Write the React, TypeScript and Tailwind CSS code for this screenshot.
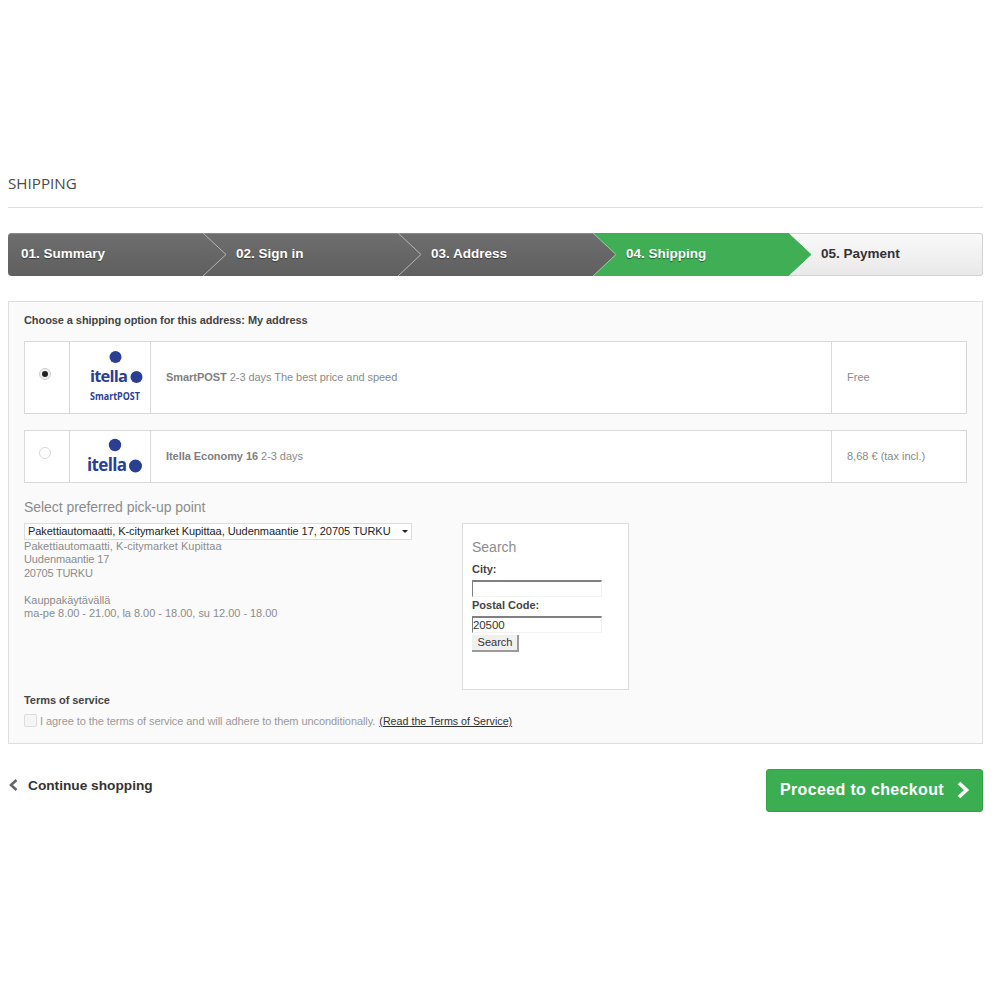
const steps = [
  { label: "01. Summary", kind: "done" },
  { label: "02. Sign in", kind: "done" },
  { label: "03. Address", kind: "done" },
  { label: "04. Shipping", kind: "current" },
  { label: "05. Payment", kind: "todo" },
];

const StepArrow = ({ id, current, stroke }: { id: string; current?: boolean; stroke: string }) => {
  return (
    <svg className="absolute -right-[24px] top-0 z-10" width="24" height="43" viewBox="0 0 24 43">
      <defs>
        <linearGradient id={id} x1="0" y1="0" x2="0" y2="1">
          <stop offset="0" stopColor={current ? "#3fae55" : "#6e6e6e"} />
          <stop offset="1" stopColor={current ? "#3fae55" : "#5f5f5f"} />
        </linearGradient>
      </defs>
      <path d="M0 0 L23 21.5 L0 43 Z" fill={`url(#${id})`} />
      <path d="M0 0 L23 21.5 L0 43" fill="none" stroke={stroke} strokeWidth="1" />
    </svg>
  );
};

const Step = ({ label, kind, index }: { label: string; kind: string; index: number }) => {
  const base = "relative w-[195px] shrink-0 h-[43px] pb-[1px] flex items-center text-[13.5px] font-bold";
  if (kind === "todo") {
    return (
      <div className={`${base} pl-[33px] border-y border-r border-[#d2d2d2] rounded-r-[3px] bg-gradient-to-b from-[#f9f9f9] to-[#e9e9e9] text-[#333]`}>
        {label}
      </div>
    );
  }
  const isCurrent = kind === "current";
  return (
    <div
      className={`${base} text-white [text-shadow:0_1px_1px_rgba(0,0,0,0.45)] ${index === 0 ? "pl-[13px] rounded-l-[4px]" : "pl-[33px]"} ${
        isCurrent ? "bg-[#3fae55]" : "bg-gradient-to-b from-[#6e6e6e] to-[#5f5f5f] shadow-[inset_0_1px_0_#8a8a8a]"
      }`}
    >
      {label}
      <StepArrow id={`arrow-${index}`} current={isCurrent} stroke={isCurrent ? "#3fae55" : index === 2 ? "#9fc9a8" : "#b5b5b5"} />
    </div>
  );
};

const SmartPostLogo = () => {
  return (
    <svg width="80" height="71" viewBox="0 0 80 71">
      <circle cx="45.5" cy="15" r="6" fill="#2b3f92" />
      <text x="20" y="40" fontFamily="'Open Sans', sans-serif" fontSize="16.5" fontWeight="700" textLength="38" fill="#2b3f92">itella</text>
      <circle cx="66.5" cy="35" r="6" fill="#2b3f92" />
      <text x="20" y="58" fontFamily="'Open Sans', sans-serif" fontSize="10" fontWeight="700" textLength="50" lengthAdjust="spacingAndGlyphs" fill="#2b3f92">SmartPOST</text>
    </svg>
  );
};

const ItellaLogo = () => {
  return (
    <svg width="80" height="51" viewBox="0 0 80 51">
      <circle cx="45" cy="14" r="6.2" fill="#2b3f92" />
      <text x="17" y="40" fontFamily="'Open Sans', sans-serif" fontSize="17" fontWeight="700" textLength="40" fill="#2b3f92">itella</text>
      <circle cx="65.5" cy="35" r="6.5" fill="#2b3f92" />
    </svg>
  );
};

const Radio = ({ checked }: { checked?: boolean }) => {
  return (
    <span className={`flex items-center justify-center w-[12px] h-[12px] rounded-full border ${checked ? "border-[#cfcfcf] bg-[#f1f1f1]" : "border-[#d8d8d8] bg-white"}`}>
      {checked && <span className="w-[6px] h-[6px] rounded-full bg-[#222]" />}
    </span>
  );
};

const ShippingRow = ({
  height,
  radioTop,
  radio,
  logo,
  name,
  detail,
  price,
}: {
  height: string;
  radioTop: string;
  radio: React.ReactNode;
  logo: React.ReactNode;
  name: string;
  detail: string;
  price: string;
}) => {
  return (
    <div className={`flex ${height} border border-[#d9d9d9] bg-white text-[11px] text-[#8a8a8a]`}>
      <div className={`w-[45px] pl-[14px] ${radioTop} border-r border-[#d9d9d9]`}>{radio}</div>
      <div className="w-[81px] border-r border-[#d9d9d9]">{logo}</div>
      <div className="flex-1 flex items-center pl-[15px] tracking-[-0.05px] border-r border-[#d9d9d9]">
        <span>
          <span className="font-bold text-[#808080]">{name}</span> {detail}
        </span>
      </div>
      <div className="w-[134px] flex items-center pl-[15px]">{price}</div>
    </div>
  );
};

const App = () => {
  return (
    <div className="w-[1000px] h-[1000px] bg-white pl-[8px] pr-[17px] pt-[175px] font-['Liberation_Sans',sans-serif]">
      <h1 className="font-['Open_Sans',sans-serif] text-[15.2px] font-medium leading-[16px] text-[#4a4a4a] pb-[16px] border-b border-[#dedede]">SHIPPING</h1>

      {/* Steps */}
      <div className="flex mt-[25px] w-[975px]">
        {steps.map((step, i) => (
          <Step key={step.label} label={step.label} kind={step.kind} index={i} />
        ))}
      </div>

      {/* Main panel */}
      <div className="mt-[25px] h-[443px] border border-[#dedede] bg-[#fafafa] px-[15px] pt-[12px]">
        <p className="text-[11px] leading-[13px] font-bold tracking-[-0.08px] text-[#444]">Choose a shipping option for this address: My address</p>

        <div className="mt-[14px] flex flex-col gap-[16px]">
          <ShippingRow
            height="h-[73px]"
            radioTop="pt-[26px]"
            radio={<Radio checked />}
            logo={<SmartPostLogo />}
            name="SmartPOST"
            detail="2-3 days The best price and speed"
            price="Free"
          />
          <ShippingRow
            height="h-[53px]"
            radioTop="pt-[16px]"
            radio={<Radio />}
            logo={<ItellaLogo />}
            name="Itella Economy 16"
            detail="2-3 days"
            price="8,68 € (tax incl.)"
          />
        </div>

        <div className="flex mt-[16px]">
          <div className="w-[438px]">
            <p className="text-[14px] leading-[16px] text-[#8c8c8c] tracking-[-0.05px]">Select preferred pick-up point</p>
            <div className="relative mt-[8px] w-[388px] h-[17px] border border-[#dcdcdc] bg-white pl-[3px] text-[11px] tracking-[-0.05px] leading-[15px] text-[#222] whitespace-nowrap">
              <select className="appearance-none w-full h-[15px] leading-[15px] outline-none">
                <option>Pakettiautomaatti, K-citymarket Kupittaa, Uudenmaantie 17, 20705 TURKU</option>
              </select>
              <span className="absolute right-[3px] top-[6px] border-x-[3px] border-t-[3px] border-x-transparent border-t-[#222]" />
            </div>
            <div className="text-[11px] leading-[13.4px] text-[#8c8c8c] tracking-[-0.03px]">
              <p className="tracking-[0.05px]">Pakettiautomaatti, K-citymarket Kupittaa</p>
              <p className="tracking-[-0.1px]">Uudenmaantie 17</p>
              <p className="tracking-[-0.25px]">20705 TURKU</p>
              <p className="mt-[13.4px]">Kauppakäytävällä</p>
              <p>ma-pe 8.00 - 21.00, la 8.00 - 18.00, su 12.00 - 18.00</p>
            </div>
          </div>

          <div className="w-[167px] h-[167px] mt-[24px] border border-[#dcdcdc] bg-white pl-[9px] pt-[15px]">
            <p className="text-[14px] leading-[16px] text-[#8c8c8c]">Search</p>
            <p className="mt-[8px] text-[11px] leading-[13px] font-bold text-[#444]">City:</p>
            <div className="mt-[4px] w-[130px] h-[17px] border-t-2 border-l border-r border-b border-t-[#808080] border-l-[#808080] border-r-[#f2f2f2] border-b-[#f2f2f2] bg-white" />
            <p className="mt-[2px] text-[11px] leading-[13px] font-bold text-[#444]">Postal Code:</p>
            <div className="mt-[4px] w-[130px] h-[17px] border-t-2 border-l border-r border-b border-t-[#808080] border-l-[#808080] border-r-[#f2f2f2] border-b-[#f2f2f2] bg-white text-[11.5px] tracking-[-0.1px] leading-[15px] text-[#333]">20500</div>
            <button className="block ml-0 mt-[2px] w-[47px] h-[17px] pl-px bg-[#f0f0f0] border-r-2 border-b-2 border-[#9a9a9a] text-[11px] leading-[13px] text-[#333]">Search</button>
          </div>
        </div>

        <p className="mt-[4px] text-[11px] leading-[13px] font-bold tracking-[-0.05px] text-[#444]">Terms of service</p>
        <div className="mt-[7px] flex items-start text-[11px] leading-[13px] text-[#999] tracking-[-0.07px]">
          <span className="w-[13px] h-[13px] mr-[3px] border border-[#dcdcdc] bg-[#f5f5f5] rounded-[2px]" />
          <span className="mt-px">I agree to the terms of service and will adhere to them unconditionally.</span>
          <span className="mt-px ml-[4px] text-[10.7px] tracking-normal text-[#333] underline">(Read the Terms of Service)</span>
        </div>
      </div>

      {/* Footer actions */}
      <div className="flex justify-between mt-[25px]">
        <div className="flex items-center h-[34px] text-[13.7px] font-bold text-[#333]">
          <svg className="mr-[10px] ml-px -mt-[2px]" width="9" height="12" viewBox="0 0 9 12">
            <path d="M7.5 1 L2 6 L7.5 11" fill="none" stroke="#666" strokeWidth="2.6" />
          </svg>
          Continue shopping
        </div>
        <button className="flex items-center w-[217px] h-[43px] pl-[13px] pb-[2px] rounded-[3px] bg-[#3cae52] border border-[#35a04a] text-[16px] font-bold text-white tracking-[0.35px]">
          Proceed to checkout
          <svg className="ml-[12px]" width="14" height="18" viewBox="0 0 14 18">
            <path d="M3 2 L10.5 9 L3 16" fill="none" stroke="#fff" strokeWidth="3.6" />
          </svg>
        </button>
      </div>
    </div>
  );
};

export default App;
